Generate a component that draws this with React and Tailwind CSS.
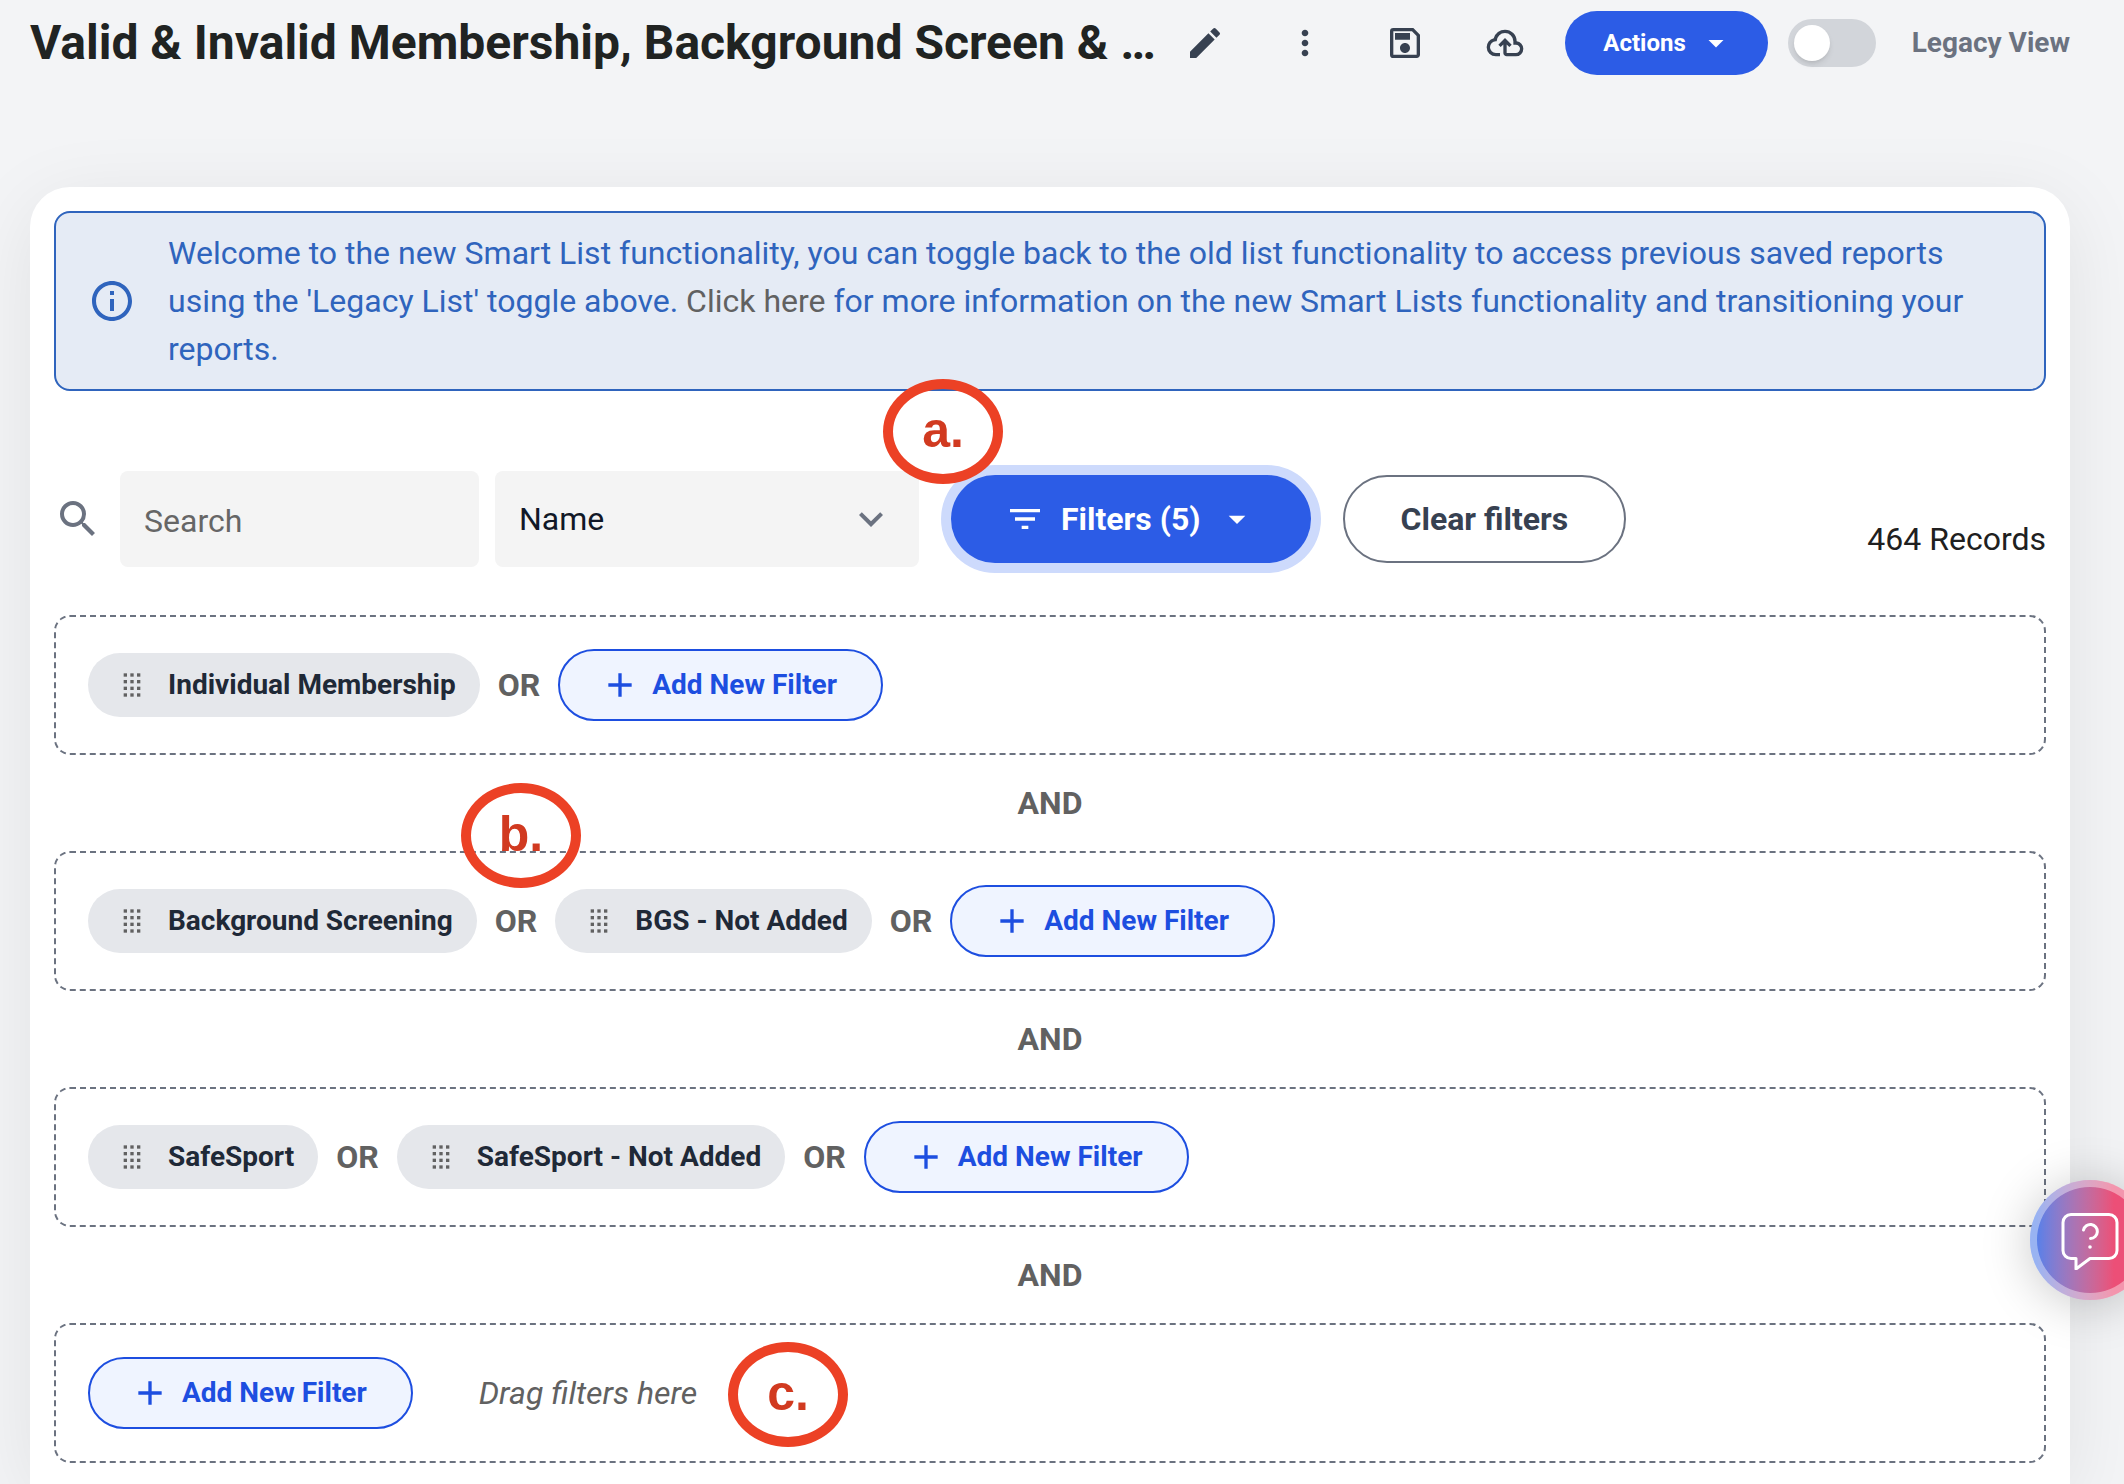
import { useState } from "react";
import {
  MdAdd,
  MdArrowDropDown,
  MdEdit,
  MdExpandMore,
  MdFilterList,
  MdInfoOutline,
  MdMoreVert,
  MdOutlineSave,
  MdSearch,
} from "react-icons/md";

const FILTER_GROUPS = [
  ["Individual Membership"],
  ["Background Screening", "BGS - Not Added"],
  ["SafeSport", "SafeSport - Not Added"],
];

function CloudUploadIcon() {
  return (
    <svg width="40" height="40" viewBox="0 -960 960 960" fill="currentColor" aria-hidden="true">
      <path d="M260-160q-91 0-155.5-63T40-377q0-78 47-139t123-78q25-92 100-149t170-57q117 0 198.5 81.5T760-520q69 8 114.5 59.5T920-340q0 75-52.5 127.5T740-160H520q-33 0-56.5-23.5T440-240v-206l-64 62-56-56 160-160 160 160-56 56-64-62v206h220q42 0 71-29t29-71q0-42-29-71t-71-29h-60v-80q0-83-58.5-141.5T480-720q-83 0-141.5 58.5T280-520h-20q-58 0-99 41t-41 99q0 58 41 99t99 41h100v80H260Z" />
    </svg>
  );
}

function GripIcon() {
  return (
    <svg width="40" height="40" viewBox="0 0 24 24" fill="#616161" aria-hidden="true">
      {[5, 9, 13, 17].map((y) =>
        [7, 11, 15].map((x) => <rect key={`${x}-${y}`} x={x} y={y} width="2" height="2" />)
      )}
    </svg>
  );
}

function IconButton({ label, children }) {
  return (
    <button aria-label={label} className="grid h-16 w-[100px] place-items-center text-[#374151]">
      {children}
    </button>
  );
}

function FilterChip({ name }) {
  return (
    <button className="flex h-16 items-center gap-4 rounded-full bg-[#e5e7eb] px-6 text-[28px] leading-10 font-bold text-[#1f2937]">
      <GripIcon />
      {name}
    </button>
  );
}

function AddFilterButton() {
  return (
    <button className="flex h-[72px] items-center gap-3 rounded-full border-2 border-[#1d4ee0] bg-[#eff4ff] pr-11 pl-10 text-[28px] leading-10 font-bold text-[#1d4ee0]">
      <MdAdd size={40} />
      Add New Filter
    </button>
  );
}

// Red ring with a letter, placed over the part of the page that it points to
function Marker({ letter, className }) {
  return (
    <span
      className={`pointer-events-none absolute z-10 flex h-[105px] w-[120px] items-center justify-center rounded-[50%] border-10 border-[#ec4125] pb-1 font-['Liberation_Sans',sans-serif] text-[50px] leading-none font-bold text-[#d13a20] ${className}`}
    >
      {letter}
    </span>
  );
}

function FilterGroup({ filters, children }) {
  return (
    <div className="relative flex items-center gap-[18px] rounded-2xl border-2 border-dashed border-[#6b7280] p-8">
      {filters.map((name) => (
        <div key={name} className="flex items-center gap-[18px]">
          <FilterChip name={name} />
          <span className="text-[32px] leading-12 font-bold text-[#616161]">OR</span>
        </div>
      ))}
      <AddFilterButton />
      {children}
    </div>
  );
}

function AndDivider() {
  return (
    <div className="flex h-24 items-center justify-center text-[32px] leading-12 font-bold text-[#616161]">
      AND
    </div>
  );
}

function HelpButton() {
  return (
    <button
      aria-label="Help"
      className="fixed right-[-26px] bottom-[184px] z-20 grid size-[120px] place-items-center rounded-full bg-linear-to-r from-[#5480ea] from-5% to-[#ec4f77] to-70% shadow-[0_4px_50px_rgba(0,0,0,0.22),inset_0_0_0_7px_rgba(255,255,255,0.4)]"
    >
      <svg
        width="60"
        height="60"
        viewBox="0 0 60 60"
        fill="none"
        stroke="#fff"
        strokeWidth="3"
        strokeLinecap="round"
        strokeLinejoin="round"
        aria-hidden="true"
      >
        <path d="M11 4.500h38a8 8 0 0 1 8 8v28a8 8 0 0 1-8 8H30L16 59V48.500h-5a8 8 0 0 1-8-8v-28a8 8 0 0 1 8-8z" />
        <path d="M23.500 20a7 7 0 1 1 7 8.500" />
        <circle cx="30" cy="37" r="1.800" fill="#fff" stroke="none" />
      </svg>
    </button>
  );
}

export default function App() {
  const [legacy, setLegacy] = useState(false);
  const [search, setSearch] = useState("");

  return (
    <div className="flex min-h-screen flex-col overflow-x-hidden bg-[#f3f4f6] px-[30px] pr-[54px] pt-[11px] font-[Roboto,sans-serif]">
      {/* HEADER */}
      <header className="flex h-16 items-center">
        <h1 className="min-w-0 flex-1 text-[48px] leading-16 font-bold whitespace-nowrap text-[#202322]">
          Valid &amp; Invalid Membership, Background Screen &amp; …
        </h1>
        <IconButton label="Edit name">
          <MdEdit size={40} />
        </IconButton>
        <IconButton label="More options">
          <MdMoreVert size={40} />
        </IconButton>
        <IconButton label="Save">
          <MdOutlineSave size={40} />
        </IconButton>
        <IconButton label="Upload">
          <CloudUploadIcon />
        </IconButton>
        <button className="ml-[10px] flex h-16 items-center gap-3 rounded-full bg-[#2c5ce6] pr-[34px] pl-[38px] text-2xl font-bold text-white">
          Actions
          <MdArrowDropDown size={36} />
        </button>
        <label className="ml-5 flex items-center gap-9 text-[28px] leading-10 font-bold text-[#6b7280]">
          <input
            type="checkbox"
            role="switch"
            checked={legacy}
            onChange={(e) => setLegacy(e.target.checked)}
            className="h-12 w-[88px] appearance-none rounded-full bg-[#d2d5da] p-1.5 before:block before:size-9 before:rounded-full before:bg-white before:shadow-md checked:bg-[#2c5ce6] checked:before:ml-10"
          />
          Legacy View
        </label>
      </header>

      <main className="mt-28 flex-1 rounded-t-[40px] bg-white px-6 pt-6 pb-5 shadow-[0_16px_80px_rgba(0,0,0,0.08)]">
        {/* NOTICE */}
        <div className="flex items-center gap-8 rounded-2xl border-2 border-[#2f64bd] bg-[#e5ebf5] px-8 py-4 text-[#2f64bd]">
          <MdInfoOutline size={48} className="shrink-0" />
          <p className="text-[32px] leading-12">
            Welcome to the new Smart List functionality, you can toggle back to the old list functionality to
            access previous saved reports using the 'Legacy List' toggle above.{" "}
            <a href="#" className="text-[#616161]">
              Click here
            </a>{" "}
            for more information on the new Smart Lists functionality and transitioning your reports.
          </p>
        </div>

        {/* TOOLBAR */}
        <div className="mt-20 flex items-center">
          <label htmlFor="search" aria-label="Search" className="mr-[18px] text-[#6b7280]">
            <MdSearch size={48} />
          </label>
          <input
            id="search"
            type="text"
            placeholder="Search"
            value={search}
            onChange={(e) => setSearch(e.target.value)}
            className="h-24 w-[359px] rounded-lg bg-[#f4f4f4] px-6 pt-1 text-[32px] text-[#111827] placeholder:text-[#666]"
          />
          <div className="relative ml-4">
            <select
              aria-label="Search field"
              className="h-24 w-[424px] appearance-none rounded-lg bg-[#f4f4f4] px-6 text-[32px] text-[#111827]"
            >
              <option>Name</option>
            </select>
            <MdExpandMore
              size={48}
              className="pointer-events-none absolute inset-y-0 right-6 my-auto text-[#6b7280]"
            />
          </div>
          <div className="relative ml-8">
            <button className="flex h-[88px] items-center gap-4 rounded-full bg-[#2c5ce6] px-[54px] text-[32px] font-bold text-white shadow-[0_0_0_10px_#cddafc]">
              <MdFilterList size={40} />
              Filters (5)
              <MdArrowDropDown size={40} />
            </button>
            <Marker letter="a." className="top-[-96px] left-[-68px]" />
          </div>
          <button className="ml-8 h-[88px] rounded-full border-2 border-[#6b7280] px-14 text-[32px] font-bold text-[#374151]">
            Clear filters
          </button>
          <p className="ml-auto self-end text-[32px] leading-14 text-[#202020]">464 Records</p>
        </div>

        {/* FILTER GROUPS */}
        <div className="mt-12">
          {FILTER_GROUPS.map((filters, i) => (
            <div key={filters[0]}>
              <FilterGroup filters={filters}>
                {i === 1 && <Marker letter="b." className="top-[-70px] left-[405px]" />}
              </FilterGroup>
              <AndDivider />
            </div>
          ))}
          <FilterGroup filters={[]}>
            <span className="ml-12 text-[32px] leading-12 text-[#616161] italic">Drag filters here</span>
            <Marker letter="c." className="top-[17px] left-[672px]" />
          </FilterGroup>
        </div>
      </main>

      <HelpButton />
    </div>
  );
}
